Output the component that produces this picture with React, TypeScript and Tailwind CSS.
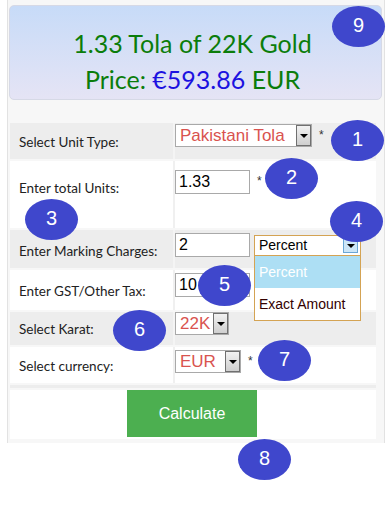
import React from 'react';

const Badge = ({ n, className }: { n: string; className: string }) => (
  <div
    className={`absolute flex h-[41px] w-[53px] items-center justify-center rounded-[50%] bg-[#3f47cc] pb-[3px] font-['Liberation_Sans',sans-serif] text-[20px] text-white ${className}`}
  >
    {n}
  </div>
);

const Arrow = ({ active = false }: { active?: boolean }) => (
  <div
    className={`flex h-full w-[15px] items-center justify-center border ${
      active ? 'border-[#6aa6d6] bg-[#cde6f7]' : 'border-[#707070] bg-gradient-to-b from-[#f2f2f2] to-[#cfcfcf]'
    }`}
  >
    <div className="h-0 w-0 border-x-[4px] border-t-[4px] border-x-transparent border-t-black" />
  </div>
);

const Select = ({ value, width }: { value: string; width: string }) => (
  <div className={`flex h-[23px] items-center border border-[#a9a9a9] bg-white ${width}`}>
    <span className="flex-1 pl-[4px] font-['Liberation_Sans',sans-serif] text-[17px] leading-none text-[#d9534f]">
      {value}
    </span>
    <Arrow />
  </div>
);

const Input = ({ value }: { value: string }) => (
  <div className="flex h-[24px] w-[75px] items-center border border-[#a9a9a9] bg-white pl-[3px] font-['Liberation_Sans',sans-serif] text-[16px] text-black">
    {value}
  </div>
);

const Star = () => (
  <span className="ml-[7px] self-start pt-[2px] font-['Liberation_Sans',sans-serif] text-[12px] text-[#333]">*</span>
);

const Row = ({
  label,
  gray,
  height,
  labelPad,
  children,
}: {
  label: string;
  gray?: boolean;
  height: string;
  labelPad: string;
  children: React.ReactNode;
}) => (
  <div className={`flex ${height} ${gray ? 'bg-[#ededed]' : 'bg-white'}`}>
    <div className={`w-[163px] pl-[9px] text-[13.5px] text-[#222] ${labelPad}`}>{label}</div>
    <div className={`w-[2px] ${gray ? 'bg-[#f4f4f4]' : 'bg-[#f0f0f0]'}`} />
    <div className="flex-1">{children}</div>
  </div>
);

export default function App() {
  return (
    <div className="relative h-[509px] w-[388px] bg-white font-['Lato',sans-serif]">
      <div className="ml-[7px] h-[443px] w-[378px] border-x border-[#e2e2e2] bg-[#f7f7f7] pt-[5px]">
        {/* Result header */}
        <div className="mx-[1px] flex h-[95px] w-[373px] flex-col items-center rounded-[5px] border border-[#d6d9e6] bg-gradient-to-b from-[#c7dbf8] to-[#e5e4f5] pr-[6px] pt-[22px]">
          <div className="text-[25px] leading-[30px] text-[#0b7d0b]">1.33 Tola of 22K Gold</div>
          <div className="mt-[6px] text-[25px] leading-[30px] text-[#0b7d0b]">
            Price: <span className="text-[#1c12e0]">€593.86</span> EUR
          </div>
        </div>

        {/* Form table */}
        <div className="mt-[23px] ml-[2px] flex w-[366px] flex-col gap-[2px]">
          <Row label="Select Unit Type:" gray height="h-[36px]" labelPad="pt-[9px]">
            <div className="flex items-center pt-[1px]">
              <Select value="Pakistani Tola" width="w-[137px]" />
              <Star />
            </div>
          </Row>
          <Row label="Enter total Units:" height="h-[67px]" labelPad="pt-[17px]">
            <div className="flex items-center pt-[9px]">
              <Input value="1.33" />
              <Star />
            </div>
          </Row>
          <Row label="Enter Marking Charges:" gray height="h-[38px]" labelPad="pt-[11px]">
            <div className="flex items-start pt-[3px]">
              <Input value="2" />
              <div className="relative ml-[4px] mt-[2px] w-[107px]">
                <div className="flex h-[21px] items-center border border-[#d4a353] bg-white pr-[2px]">
                  <span className="flex-1 pl-[4px] font-['Liberation_Sans',sans-serif] text-[14px] text-black">
                    Percent
                  </span>
                  <div className="h-[15px]">
                    <Arrow active />
                  </div>
                </div>
                <div className="absolute left-0 top-[20px] z-10 w-[107px] border border-[#d4a353] bg-white font-['Liberation_Sans',sans-serif] text-[14px]">
                  <div className="flex h-[32px] items-center bg-[#addff4] pl-[4px] text-white">Percent</div>
                  <div className="flex h-[32px] items-center pl-[4px] text-[#300]">Exact Amount</div>
                </div>
              </div>
            </div>
          </Row>
          <Row label="Enter GST/Other Tax:" height="h-[40px]" labelPad="pt-[11px]">
            <div className="pt-[3px]">
              <Input value="10" />
            </div>
          </Row>
          <Row label="Select Karat:" gray height="h-[33px]" labelPad="pt-[7px]">
            <div className="flex">
              <Select value="22K" width="w-[54px]" />
            </div>
          </Row>
          <Row label="Select currency:" height="h-[36px]" labelPad="pt-[9px]">
            <div className="flex items-center pt-[3px]">
              <Select value="EUR" width="w-[66px]" />
              <Star />
            </div>
          </Row>
          <div className="h-[3px] bg-[#ededed]" />
          <div className="flex h-[49px] justify-center bg-white pr-[2px]">
            <button className="h-[47px] w-[130px] bg-[#4caf50] font-['Liberation_Sans',sans-serif] text-[16px] text-white">
              Calculate
            </button>
          </div>
        </div>
      </div>

      {/* Annotation markers */}
      <Badge n="9" className="left-[332px] top-[6px]" />
      <Badge n="1" className="left-[331px] top-[120px]" />
      <Badge n="2" className="left-[265px] top-[158px]" />
      <Badge n="3" className="left-[25px] top-[199px]" />
      <Badge n="4" className="left-[330px] top-[201px]" />
      <Badge n="5" className="left-[198px] top-[265px]" />
      <Badge n="6" className="left-[113px] top-[310px]" />
      <Badge n="7" className="left-[258px] top-[340px]" />
      <Badge n="8" className="left-[238px] top-[439px]" />
    </div>
  );
}
